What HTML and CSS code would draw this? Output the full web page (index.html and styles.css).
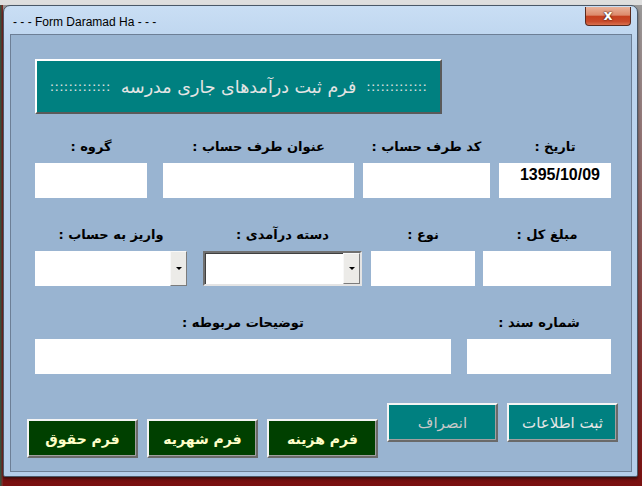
FILE: index.html
```html
<!DOCTYPE html>
<html>
	<head>
		<meta charset="utf-8">
		<title>Form Daramad Ha</title>
		<link rel="stylesheet" href="styles.css">
	</head>
	<body>
		<div class="desktop">
			<div class="window">
				<div class="titlebar">
					<span class="title">- - - Form Daramad Ha - - -</span>
					<span class="close">x</span>
				</div>
				<div class="client">
					<div class="banner">
						<span class="dots">:::::::::::::</span>
						<span class="banner-txt">فرم ثبت درآمدهای جاری مدرسه</span>
						<span class="dots">:::::::::::::</span>
					</div>

					<div class="row first">
						<div class="field w112">
							<div class="lbl">گروه :</div>
							<div class="box"></div>
						</div>
						<div class="field w191 gap16">
							<div class="lbl">عنوان طرف حساب :</div>
							<div class="box"></div>
						</div>
						<div class="field w127 gap9">
							<div class="lbl">کد طرف حساب :</div>
							<div class="box"></div>
						</div>
						<div class="field w112 gap9">
							<div class="lbl">تاریخ :</div>
							<div class="box date">1395/10/09</div>
						</div>
					</div>

					<div class="row">
						<div class="field w152">
							<div class="lbl">واریز به حساب :</div>
							<div class="box combo"><span class="drop"><i></i></span></div>
						</div>
						<div class="field w159 gap16">
							<div class="lbl">دسته درآمدی :</div>
							<div class="box combo sunken"><span class="drop"><i></i></span></div>
						</div>
						<div class="field w104 gap9">
							<div class="lbl">نوع :</div>
							<div class="box"></div>
						</div>
						<div class="field w128 gap8">
							<div class="lbl">مبلغ کل :</div>
							<div class="box"></div>
						</div>
					</div>

					<div class="row">
						<div class="field w416">
							<div class="lbl">توضیحات مربوطه :</div>
							<div class="box"></div>
						</div>
						<div class="field w144 gap16">
							<div class="lbl">شماره سند :</div>
							<div class="box"></div>
						</div>
					</div>

					<div class="actions">
						<div class="group low">
							<div class="btn green">فرم حقوق</div>
							<div class="btn green">فرم شهریه</div>
							<div class="btn green">فرم هزینه</div>
						</div>
						<div class="group high">
							<div class="btn teal dim">انصراف</div>
							<div class="btn teal">ثبت اطلاعات</div>
						</div>
					</div>
				</div>
			</div>
		</div>
	</body>
</html>
```

FILE: styles.css
```css
html, body{
	margin: 0;
	padding: 0;
}
body{
	width: 642px;
	height: 486px;
	overflow: hidden;
	font-family: "DejaVu Sans", sans-serif;
}
.desktop{
	height: 486px;
	box-sizing: border-box;
	padding: 5px 4px 0 3px;
	background:
		linear-gradient(to bottom, #dedede 0, #dedede 5px, transparent 5px),
		linear-gradient(to right, #2a5a44 0, #8a2020 3px, transparent 3px),
		linear-gradient(to bottom, #9a9a9a 0, #7a1010 100%);
}
.window{
	width: 635px;
	height: 472px;
	box-sizing: border-box;
	padding: 0 5px 5px 6px;
	border: 1px solid #4a5868;
	border-radius: 7px 7px 2px 2px;
	background: linear-gradient(to bottom, #c9def4 0, #bcd4ee 40px, #b4cde9 100%);
	box-shadow: 0 2px 3px rgba(0,0,0,0.5);
}
.titlebar{
	height: 28px;
	display: flex;
	align-items: flex-start;
	justify-content: space-between;
}
.title{
	margin-top: 9px;
	margin-left: 3px;
	font-family: "Liberation Sans", sans-serif;
	font-size: 12px;
	color: #000;
}
.close{
	width: 44px;
	height: 18px;
	margin-top: 1px;
	margin-right: 1px;
	border: 1px solid #5a2a1e;
	border-top: none;
	border-radius: 0 0 4px 4px;
	background: linear-gradient(to bottom, #e9b29a 0, #dd8a6c 45%, #c5401f 52%, #c94a2a 80%, #d8704e 100%);
	color: #fff;
	font-family: "DejaVu Sans", sans-serif;
	font-weight: bold;
	font-size: 14px;
	line-height: 16px;
	text-align: center;
	text-shadow: 0 0 2px #3a1a10, 0 0 1px #3a1a10;
}
.client{
	height: 438px;
	box-sizing: border-box;
	border: 1px solid #6d7f96;
	background: #99b4d1;
	padding-top: 24px;
}
.banner{
	width: 407px;
	height: 55px;
	margin-left: 24px;
	box-sizing: border-box;
	display: flex;
	align-items: center;
	justify-content: center;
	gap: 10px;
	background: #008080;
	border-top: 2px solid #fff;
	border-left: 2px solid #fff;
	border-bottom: 2px solid #5a5a5a;
	border-right: 2px solid #5a5a5a;
	color: #e4e4e4;
}
.dots{
	font-size: 13px;
	letter-spacing: 0.3px;
}
.banner-txt{
	direction: rtl;
	font-size: 17.5px;
}
.row{
	display: flex;
	padding-left: 24px;
	margin-top: 27px;
}
.row.first{
	margin-top: 23px;
}
.field{
	display: flex;
	flex-direction: column;
}
.w104{ width: 104px; }
.w112{ width: 112px; }
.w127{ width: 127px; }
.w128{ width: 128px; }
.w144{ width: 144px; }
.w152{ width: 152px; }
.w159{ width: 159px; }
.w191{ width: 191px; }
.w416{ width: 416px; }
.gap8{ margin-left: 8px; }
.gap9{ margin-left: 9px; }
.gap16{ margin-left: 16px; }
.lbl{
	height: 20px;
	line-height: 20px;
	margin-bottom: 6px;
	direction: rtl;
	text-align: center;
	font-weight: bold;
	font-size: 13px;
	color: #000;
	white-space: nowrap;
}
.box{
	height: 35px;
	box-sizing: border-box;
	background: #fff;
	position: relative;
}
.date{
	text-align: right;
	padding: 2px 11px 0 0;
	font-family: "Liberation Sans", sans-serif;
	font-weight: bold;
	font-size: 16px;
	line-height: 20px;
	color: #000;
}
.combo{
	display: flex;
	justify-content: flex-end;
}
.sunken{
	border-top: 2px solid #707070;
	border-left: 2px solid #707070;
	border-bottom: 2px solid #e4e4e4;
	border-right: 2px solid #e4e4e4;
	box-shadow: inset 1px 1px 0 #404040;
}
.drop{
	width: 17px;
	box-sizing: border-box;
	display: flex;
	align-items: center;
	justify-content: center;
	background: #ecebe8;
	border: 1px solid;
	border-color: #f8f8f8 #7c7c7c #7c7c7c #f8f8f8;
}
.drop i{
	width: 0;
	height: 0;
	border-left: 3px solid transparent;
	border-right: 3px solid transparent;
	border-top: 3px solid #000;
}
.actions{
	display: flex;
	align-items: flex-start;
	margin-top: 29px;
	padding-left: 16px;
	padding-right: 13px;
}
.group{
	display: flex;
	gap: 9px;
}
.group.low{
	margin-top: 16px;
}
.group.high{
	margin-left: auto;
}
.btn{
	width: 111px;
	height: 39px;
	box-sizing: border-box;
	display: flex;
	align-items: center;
	justify-content: center;
	direction: rtl;
	border: 2px solid;
	border-color: #f4f4f4 #6a6a6a #6a6a6a #f4f4f4;
	box-shadow: inset -1px -1px 0 #a0a0a0;
}
.green{
	background: #004000;
	color: #ffffc8;
	font-weight: bold;
	font-size: 14px;
}
.teal{
	background: #008080;
	color: #e6e6e6;
	font-size: 15px;
}
.teal.dim{
	color: #c8c8c8;
}
```
